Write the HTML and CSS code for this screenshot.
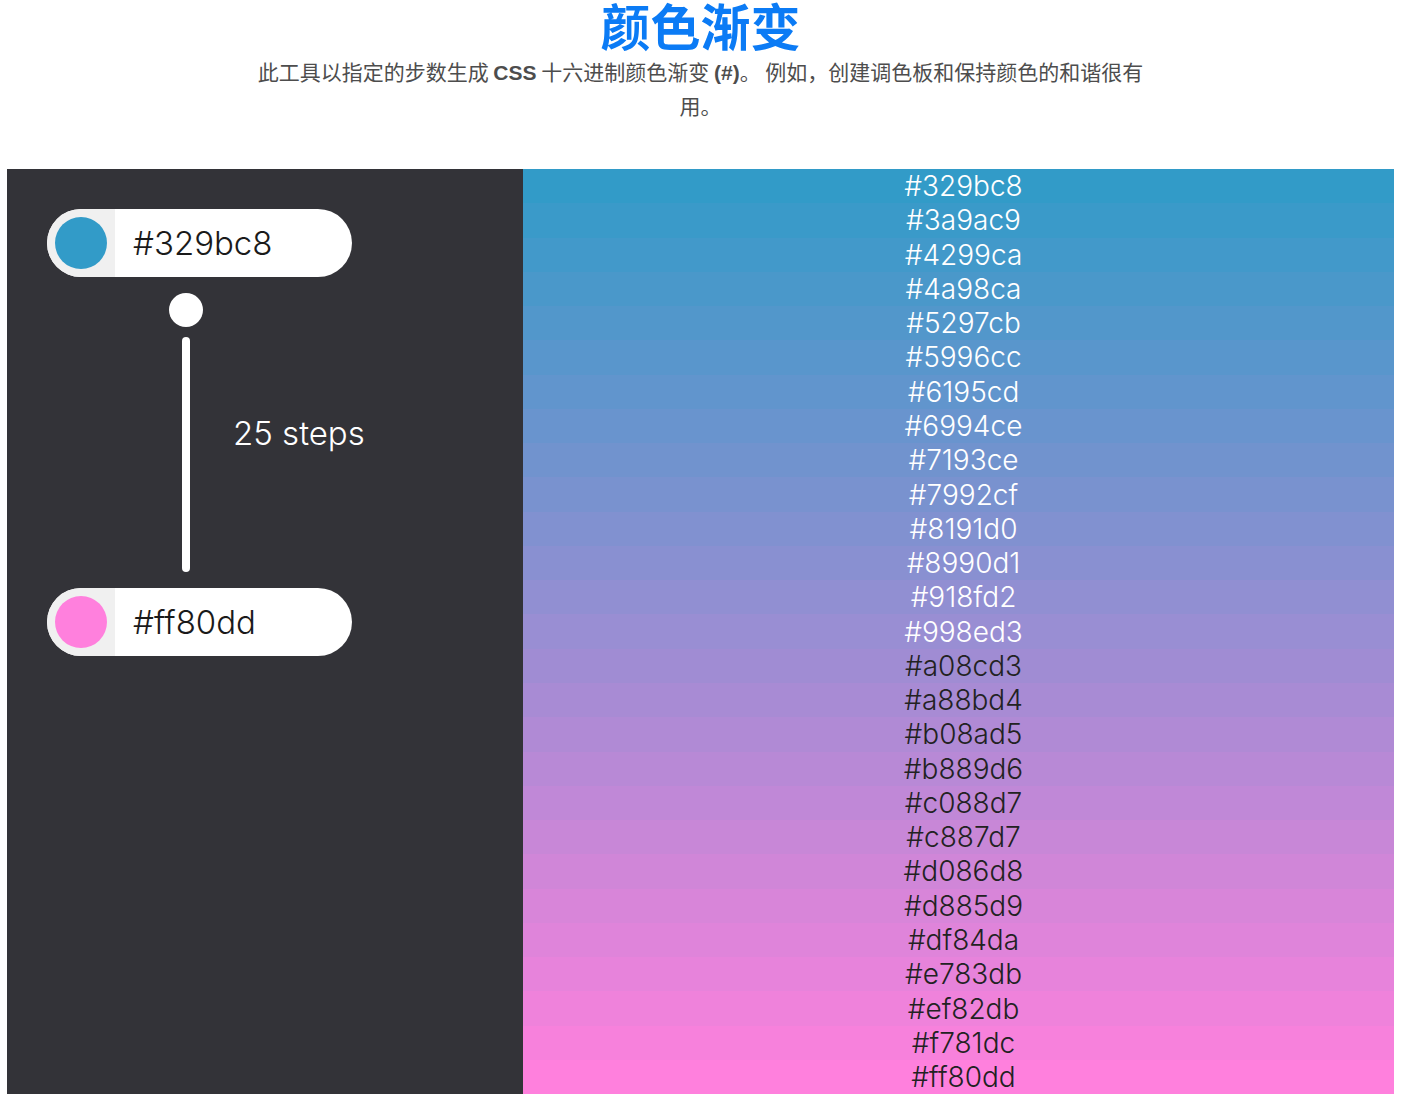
FILE: index.html
```html
<!DOCTYPE html>
<html lang="zh">
<head>
<meta charset="utf-8">
<title>颜色渐变</title>
<link rel="stylesheet" href="styles.css">
</head>
<body>
<header class="intro">
  <h1 class="title">颜色渐变</h1>
  <p class="lead">此工具以指定的步数生成 <b class="latin">CSS</b> 十六进制颜色渐变 <b class="latin">(#)</b>。 例如，创建调色板和保持颜色的和谐很有用。</p>
</header>
<main class="tool">
  <section class="controls">
    <div class="pill">
      <span class="swatch-box"><span class="swatch" style="background:#329bc8"></span></span>
      <span class="pill-text">#329bc8</span>
    </div>
    <div class="slider">
      <div class="slider-rail">
        <span class="knob"></span>
        <span class="track"></span>
      </div>
      <span class="steps">25 steps</span>
    </div>
    <div class="pill">
      <span class="swatch-box"><span class="swatch" style="background:#ff80dd"></span></span>
      <span class="pill-text">#ff80dd</span>
    </div>
  </section>
  <section class="gradient">
    <div class="row light" style="background:#329bc8">#329bc8</div>
    <div class="row light" style="background:#3a9ac9">#3a9ac9</div>
    <div class="row light" style="background:#4299ca">#4299ca</div>
    <div class="row light" style="background:#4a98ca">#4a98ca</div>
    <div class="row light" style="background:#5297cb">#5297cb</div>
    <div class="row light" style="background:#5996cc">#5996cc</div>
    <div class="row light" style="background:#6195cd">#6195cd</div>
    <div class="row light" style="background:#6994ce">#6994ce</div>
    <div class="row light" style="background:#7193ce">#7193ce</div>
    <div class="row light" style="background:#7992cf">#7992cf</div>
    <div class="row light" style="background:#8191d0">#8191d0</div>
    <div class="row light" style="background:#8990d1">#8990d1</div>
    <div class="row light" style="background:#918fd2">#918fd2</div>
    <div class="row light" style="background:#998ed3">#998ed3</div>
    <div class="row dark" style="background:#a08cd3">#a08cd3</div>
    <div class="row dark" style="background:#a88bd4">#a88bd4</div>
    <div class="row dark" style="background:#b08ad5">#b08ad5</div>
    <div class="row dark" style="background:#b889d6">#b889d6</div>
    <div class="row dark" style="background:#c088d7">#c088d7</div>
    <div class="row dark" style="background:#c887d7">#c887d7</div>
    <div class="row dark" style="background:#d086d8">#d086d8</div>
    <div class="row dark" style="background:#d885d9">#d885d9</div>
    <div class="row dark" style="background:#df84da">#df84da</div>
    <div class="row dark" style="background:#e783db">#e783db</div>
    <div class="row dark" style="background:#ef82db">#ef82db</div>
    <div class="row dark" style="background:#f781dc">#f781dc</div>
    <div class="row dark" style="background:#ff80dd">#ff80dd</div>
  </section>
</main>
</body>
</html>
```

FILE: styles.css
```css
* { box-sizing: border-box; }

body {
  margin: 0 9px 0 7px;
  background: #ffffff;
  font-family: "Inter", "Noto Sans", sans-serif;
}

.intro {
  text-align: center;
  padding-bottom: 48px;
}

.title {
  margin: 0;
  font-family: "Noto Sans CJK SC", sans-serif;
  font-weight: 700;
  font-size: 50px;
  line-height: 48px;
  color: #0b7bf5;
}

.lead {
  margin: 7px auto 0;
  max-width: 900px;
  font-family: "Noto Sans CJK SC", sans-serif;
  font-size: 21px;
  line-height: 32px;
  color: #4d4d4d;
}

.latin {
  font-family: "Liberation Sans", "Noto Sans CJK SC", sans-serif;
  font-weight: 700;
}

.tool {
  display: flex;
  height: 925px;
}

.controls {
  width: 516px;
  flex: none;
  background: #333338;
  padding: 40px 0 0 40px;
  display: flex;
  flex-direction: column;
  align-items: flex-start;
}

.pill {
  width: 305px;
  height: 68px;
  border-radius: 34px;
  background: #ffffff;
  display: flex;
  align-items: center;
  overflow: hidden;
}

.swatch-box {
  width: 68px;
  height: 68px;
  background: #f0f0f0;
  display: flex;
  align-items: center;
  justify-content: center;
}

.swatch {
  width: 52px;
  height: 52px;
  border-radius: 50%;
}

.pill-text {
  margin-left: 18px;
  font-size: 33px;
  font-weight: 300;
  color: #1a1a1a;
}

.slider {
  display: flex;
  align-items: center;
  margin: 16px 0;
  padding-left: 122px;
}

.slider-rail {
  width: 34px;
  display: flex;
  flex-direction: column;
  align-items: center;
}

.knob {
  width: 34px;
  height: 34px;
  border-radius: 50%;
  background: #ffffff;
  margin-bottom: 10px;
}

.track {
  width: 8px;
  height: 235px;
  border-radius: 4px;
  background: #ffffff;
}

.steps {
  margin-left: 30px;
  font-size: 33px;
  font-weight: 300;
  color: #ffffff;
}

.gradient {
  flex: 1;
  display: flex;
  flex-direction: column;
}

.row {
  flex: 1;
  display: flex;
  align-items: center;
  justify-content: center;
  padding-left: 10px;
  font-size: 28px;
  font-weight: 300;
}

.row.light { color: #ffffff; }
.row.dark { color: #222222; }
```
